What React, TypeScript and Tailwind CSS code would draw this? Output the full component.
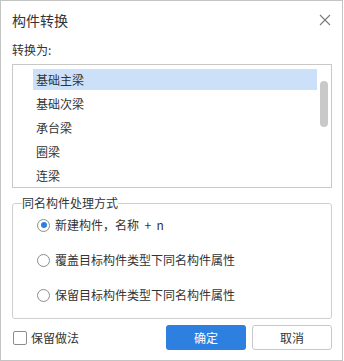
import { useState } from "react"

const items = ["基础主梁", "基础次梁", "承台梁", "圈梁", "连梁"]
const modes = ["新建构件，名称  +  n", "覆盖目标构件类型下同名构件属性", "保留目标构件类型下同名构件属性"]

export default function App() {
  const [selected, setSelected] = useState(0)
  const [mode, setMode] = useState(0)
  const [keep, setKeep] = useState(false)

  return (
    <div
      className="w-[343px] h-[361px] border border-[#c4c4c4] bg-white flex flex-col pl-[11px] pr-[10px] text-[#333]"
      style={{ fontFamily: '"Noto Sans CJK SC", "Noto Sans", sans-serif' }}
    >
      {/* Header */}
      <div className="flex items-center justify-between pt-[9px] h-[29px]">
        <h1 className="text-[14px] leading-[20px] font-normal">构件转换</h1>
        <button className="w-[12px] h-[12px] mr-[1px] flex items-center justify-center">
          <svg width="12" height="12" viewBox="0 0 12 12">
            <path d="M1 1 L11 11 M11 1 L1 11" stroke="#7a7a7a" strokeWidth="1.1" fill="none" />
          </svg>
        </button>
      </div>

      <p className="mt-[12px] text-[12px] leading-[16px]">转换为:</p>

      {/* List */}
      <div className="relative mt-[6px] h-[124px] border border-[#c8c8c8] overflow-hidden">
        <div className="flex flex-col gap-[3px] pl-[20px] pr-[14px] pt-[4px]">
          {items.map((it, i) => (
            <div
              key={it}
              onClick={() => setSelected(i)}
              className={`h-[21px] flex items-center pl-[3px] text-[12px] ${i === selected ? "bg-[#cce1f9]" : ""}`}
            >
              {it}
            </div>
          ))}
        </div>
        <div className="absolute right-[3px] top-[16px] w-[8px] h-[46px] rounded-full bg-[#c9c9c9]" />
      </div>

      {/* Group */}
      <fieldset className="mt-[7px] border border-[#cfcfcf] rounded-[3px] px-[9px] pb-[13px]">
        <legend className="text-[12px] leading-[16px] px-0">同名构件处理方式</legend>
        <div className="flex flex-col gap-[15px] pt-[4px] pl-[15px]">
          {modes.map((m, i) => (
            <label key={m} className="h-[20px] flex items-center gap-[5px] text-[12px] whitespace-pre cursor-pointer" onClick={() => setMode(i)}>
              <span className="w-[13px] h-[13px] rounded-full border border-[#8c8c8c] bg-white flex items-center justify-center">
                {mode === i && <span className="w-[6px] h-[6px] rounded-full bg-[#2d7fe0]" />}
              </span>
              {m}
            </label>
          ))}
        </div>
      </fieldset>

      {/* Footer */}
      <div className="mt-[6px] flex items-center h-[25px]">
        <label className="flex items-center gap-[4px] text-[12px] pl-[1px] cursor-pointer" onClick={() => setKeep(!keep)}>
          <span className="w-[14px] h-[14px] rounded-[2px] border border-[#8c8c8c] bg-white flex items-center justify-center">
            {keep && (
              <svg width="10" height="10" viewBox="0 0 10 10">
                <path d="M1.5 5 L4 7.5 L8.5 2.5" stroke="#2d7fe0" strokeWidth="1.5" fill="none" />
              </svg>
            )}
          </span>
          保留做法
        </label>
        <div className="ml-auto flex gap-[6px]">
          <button className="w-[80px] h-[25px] rounded-[3px] bg-[#2d7fe0] text-white text-[12px]">确定</button>
          <button className="w-[80px] h-[25px] rounded-[3px] border border-[#c8c8c8] bg-white text-[12px] text-[#333]">取消</button>
        </div>
      </div>
    </div>
  )
}
